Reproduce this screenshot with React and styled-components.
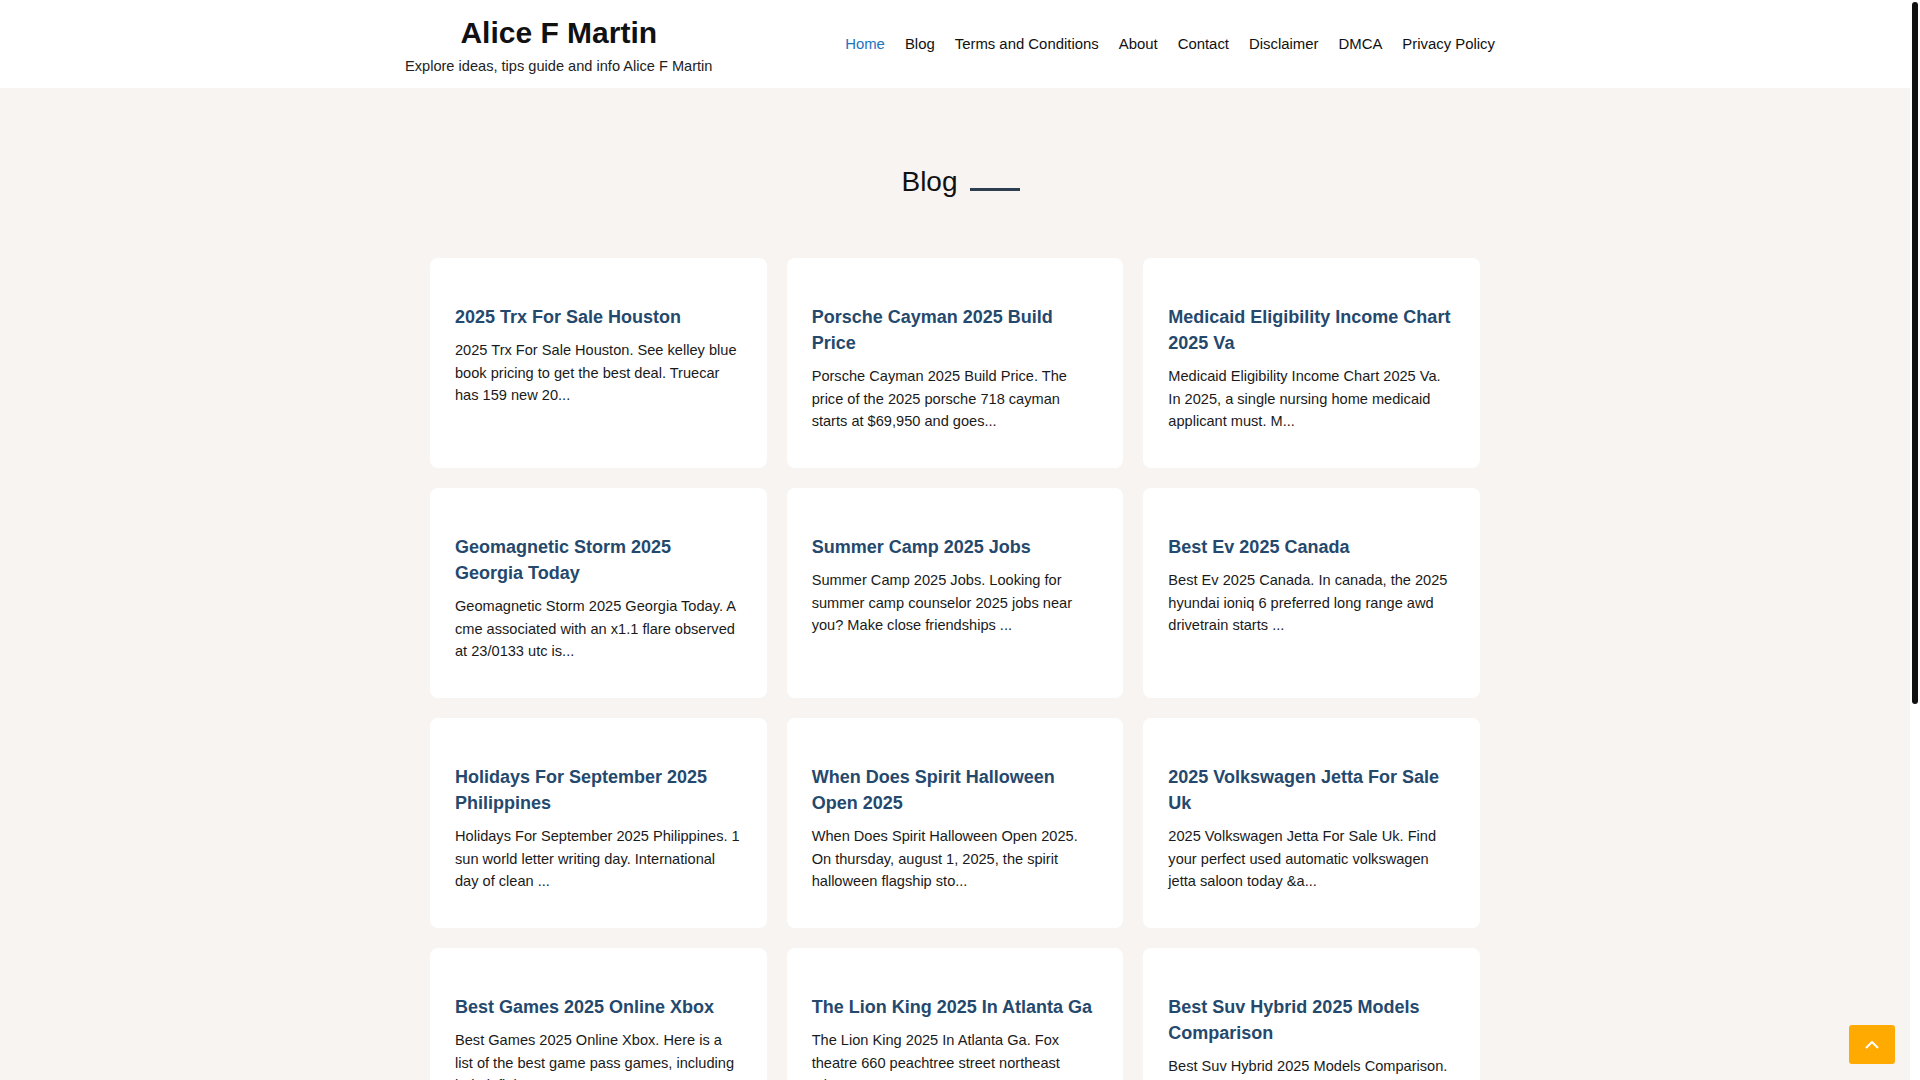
import React from "react";
import styled, { createGlobalStyle } from "styled-components";

const GlobalStyle = createGlobalStyle`
  html, body { margin: 0; padding: 0; }
  body {
    background: #f8f4f1;
    font-family: "Liberation Sans", Arial, Helvetica, sans-serif;
    color: #111;
  }
  * { box-sizing: border-box; }
`;

const Page = styled.div`
  width: calc(100% - 10px);
`;

const Header = styled.header`
  background: #fff;
`;

const HeaderInner = styled.div`
  width: 1100px;
  height: 88px;
  margin: 0 auto;
  display: flex;
  justify-content: space-between;
  align-items: center;
`;

const Brand = styled.div`
  align-self: flex-start;
  padding-top: 15px;
  display: flex;
  flex-direction: column;
  align-items: center;
`;

const SiteTitle = styled.a`
  font-size: 30px;
  line-height: 36px;
  font-weight: 700;
  color: #111;
  text-decoration: none;
`;

const Tagline = styled.p`
  margin: 5px 0 0;
  font-size: 14.6px;
  line-height: 20px;
  color: #222;
`;

const Nav = styled.ul`
  list-style: none;
  margin: 0;
  padding: 0;
  display: flex;
`;

const NavLink = styled.a`
  display: block;
  padding: 0 10px;
  font-size: 14.9px;
  line-height: 20px;
  color: ${(p) => (p.$active ? "#1e73be" : "#111")};
  text-decoration: none;
`;

const Main = styled.main`
  padding: 77px 0 80px;
`;

const PageTitle = styled.h1`
  margin: 0 0 59px;
  padding-left: 11px;
  text-align: center;
  font-size: 28px;
  line-height: 34px;
  font-weight: 400;
  color: #111;
  &::after {
    content: "";
    display: inline-block;
    width: 50px;
    height: 3px;
    margin-left: 12px;
    background: #2c3e50;
  }
`;

const Grid = styled.div`
  width: 1050px;
  margin: 0 auto;
  display: grid;
  grid-template-columns: repeat(3, 1fr);
  gap: 20px;
`;

const Card = styled.article`
  background: #fff;
  border-radius: 8px;
  padding: 46px 25px 35.5px;
`;

const CardTitle = styled.h2`
  margin: 0 0 9px;
  font-size: 18px;
  line-height: 26px;
  font-weight: 700;
  color: #25496d;
`;

const Excerpt = styled.p`
  margin: 0;
  font-size: 14.6px;
  line-height: 22.5px;
  color: #1a1a1a;
`;

const Pagination = styled.nav`
  margin-top: 60px;
  display: flex;
  justify-content: center;
  gap: 8px;
`;

const PageButton = styled.a`
  min-width: 38px;
  height: 38px;
  padding: 0 12px;
  display: flex;
  align-items: center;
  justify-content: center;
  border-radius: 4px;
  font-size: 14.5px;
  text-decoration: none;
  background: ${(p) => (p.$active ? "#ffaa00" : "#fff")};
  color: ${(p) => (p.$active ? "#fff" : "#111")};
`;

const Footer = styled.footer`
  background: #fff;
  min-height: 281px;
  padding: 40px 0;
  text-align: center;
  font-size: 14px;
  color: #333;
`;

const BackToTop = styled.a`
  position: fixed;
  right: 25px;
  bottom: 16px;
  width: 46px;
  height: 39px;
  border-radius: 3px;
  background: #ffaa00;
  display: flex;
  align-items: center;
  justify-content: center;
`;

const ScrollTrack = styled.div`
  position: fixed;
  top: 0;
  right: 0;
  width: 10px;
  height: 100vh;
  background: #fff;
`;

const ScrollThumb = styled.div`
  position: absolute;
  top: 2px;
  left: 2px;
  width: 6px;
  height: 702px;
  border-radius: 3px;
  background: #111;
`;

const navItems = [
  "Home",
  "Blog",
  "Terms and Conditions",
  "About",
  "Contact",
  "Disclaimer",
  "DMCA",
  "Privacy Policy",
];

const posts = [
  ["2025 Trx For Sale Houston", "2025 Trx For Sale Houston. See kelley blue book pricing to get the best deal. Truecar has 159 new 20..."],
  ["Porsche Cayman 2025 Build Price", "Porsche Cayman 2025 Build Price. The price of the 2025 porsche 718 cayman starts at $69,950 and goes..."],
  ["Medicaid Eligibility Income Chart 2025 Va", "Medicaid Eligibility Income Chart 2025 Va. In 2025, a single nursing home medicaid applicant must. M..."],
  ["Geomagnetic Storm 2025 Georgia Today", "Geomagnetic Storm 2025 Georgia Today. A cme associated with an x1.1 flare observed at 23/0133 utc is..."],
  ["Summer Camp 2025 Jobs", "Summer Camp 2025 Jobs. Looking for summer camp counselor 2025 jobs near you? Make close friendships ..."],
  ["Best Ev 2025 Canada", "Best Ev 2025 Canada. In canada, the 2025 hyundai ioniq 6 preferred long range awd drivetrain starts ..."],
  ["Holidays For September 2025 Philippines", "Holidays For September 2025 Philippines. 1 sun world letter writing day. International day of clean ..."],
  ["When Does Spirit Halloween Open 2025", "When Does Spirit Halloween Open 2025. On thursday, august 1, 2025, the spirit halloween flagship sto..."],
  ["2025 Volkswagen Jetta For Sale Uk", "2025 Volkswagen Jetta For Sale Uk. Find your perfect used automatic volkswagen jetta saloon today &a..."],
  ["Best Games 2025 Online Xbox", "Best Games 2025 Online Xbox. Here is a list of the best game pass games, including halo infinite, sta..."],
  ["The Lion King 2025 In Atlanta Ga", "The Lion King 2025 In Atlanta Ga. Fox theatre 660 peachtree street northeast atlanta, ga 30308. T..."],
  ["Best Suv Hybrid 2025 Models Comparison", "Best Suv Hybrid 2025 Models Comparison. Compare the best hybrid suvs of 2025 by price, fuel econ..."],
];

export default function App() {
  return (
    <>
      <GlobalStyle />
      <Page>
        <Header>
          <HeaderInner>
            <Brand>
              <SiteTitle href="#">Alice F Martin</SiteTitle>
              <Tagline>Explore ideas, tips guide and info Alice F Martin</Tagline>
            </Brand>
            <Nav>
              {navItems.map((item, i) => (
                <li key={item}>
                  <NavLink href="#" $active={i === 0}>
                    {item}
                  </NavLink>
                </li>
              ))}
            </Nav>
          </HeaderInner>
        </Header>
        <Main>
          <PageTitle>Blog</PageTitle>
          <Grid>
            {posts.map(([title, excerpt]) => (
              <Card key={title}>
                <CardTitle>{title}</CardTitle>
                <Excerpt>{excerpt}</Excerpt>
              </Card>
            ))}
          </Grid>
          <Pagination>
            <PageButton href="#" $active>1</PageButton>
            <PageButton href="#">2</PageButton>
            <PageButton href="#">3</PageButton>
            <PageButton href="#">Next</PageButton>
          </Pagination>
        </Main>
        <Footer>Copyright © 2025 Alice F Martin</Footer>
      </Page>
      <BackToTop href="#" aria-label="Back to top">
        <svg width="14" height="8" viewBox="0 0 14 8" fill="none">
          <polyline points="1,7 7,1 13,7" stroke="#fff" strokeWidth="2" />
        </svg>
      </BackToTop>
      <ScrollTrack aria-hidden="true">
        <ScrollThumb />
      </ScrollTrack>
    </>
  );
}
